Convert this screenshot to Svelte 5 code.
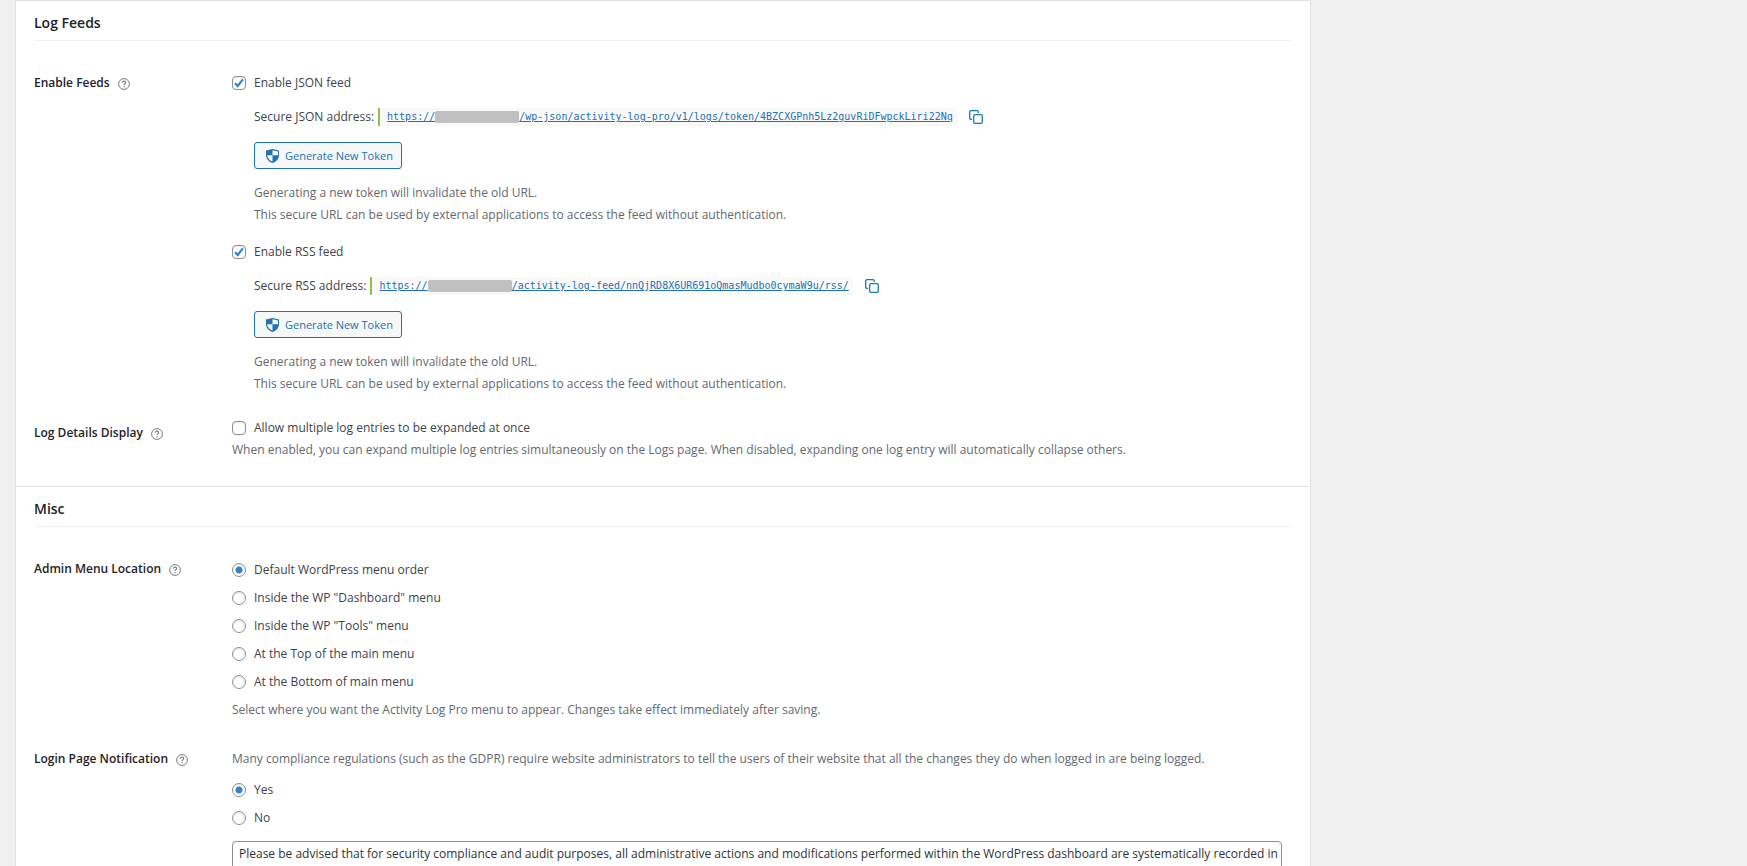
<script>
  const feeds = $state([
    {
      id: 'json',
      name: 'JSON',
      enabled: true,
      path: '/wp-json/activity-log-pro/v1/logs/token/4BZCXGPnh5Lz2guvRiDFwpckLiri22Nq',
    },
    {
      id: 'rss',
      name: 'RSS',
      enabled: true,
      path: '/activity-log-feed/nnQjRD8X6UR691oQmasMudbo0cymaW9u/rss/',
    },
  ]);

  const menuLocations = [
    { value: 'default', label: 'Default WordPress menu order' },
    { value: 'dashboard', label: 'Inside the WP "Dashboard" menu' },
    { value: 'tools', label: 'Inside the WP "Tools" menu' },
    { value: 'top', label: 'At the Top of the main menu' },
    { value: 'bottom', label: 'At the Bottom of main menu' },
  ];

  let expandMultiple = $state(false);
  let menuLocation = $state('default');
  let loginNotice = $state('yes');
  let noticeText = $state(
    'Please be advised that for security compliance and audit purposes, all administrative actions and modifications performed within the WordPress dashboard are systematically recorded in'
  );
</script>

{#snippet help(topic)}
  <button type="button" class="help" aria-label="Help: {topic}">
    <svg viewBox="0 0 12 12" width="12" height="12" fill="none" stroke="currentColor">
      <circle cx="6" cy="6" r="5.4" />
      <path d="M4.3 4.8c0-1 .7-1.7 1.7-1.7s1.7.6 1.7 1.5c0 1.2-1.6 1.2-1.6 2.4" stroke-width="1.1" />
      <path d="M6.1 8v1.2" stroke-width="1.2" />
    </svg>
  </button>
{/snippet}

<main class="wrap">
  <div class="card">
    <section>
      <h2>Log Feeds</h2>

      <div class="row">
        <div class="title">Enable Feeds {@render help('Enable Feeds')}</div>
        <div class="field feeds">
          {#each feeds as feed (feed.id)}
            <div class="feed">
              <label class="option">
                <input type="checkbox" bind:checked={feed.enabled} />
                Enable {feed.name} feed
              </label>
              <div class="feed-body">
                <div class="address">
                  <span>Secure {feed.name} address:</span>
                  <code><a href={feed.path}>https://<span class="mask"></span>{feed.path}</a></code>
                  <button type="button" class="copy" aria-label="Copy {feed.name} address">
                    <svg viewBox="0 0 14 14" width="14" height="14" fill="none" stroke="currentColor" stroke-width="1.3">
                      <rect x="4.7" y="4.7" width="8.6" height="8.6" rx="1.3" />
                      <path d="M3 9.3H2A1.3 1.3 0 0 1 .7 8V2A1.3 1.3 0 0 1 2 .7h6A1.3 1.3 0 0 1 9.3 2v1" />
                    </svg>
                  </button>
                </div>
                <button type="button" class="generate">
                  <svg viewBox="0 0 13 14" width="13" height="14">
                    <path d="M6.5 0 13 1.6v4.3C13 9.6 10.5 12.5 6.5 14 2.5 12.5 0 9.6 0 5.9V1.6z" fill="#2271b1" />
                    <path d="M6.5 1.2 12 2.5v3.8H6.5zM6.5 6.3v6.5C3.4 11.5 1.4 9.2 1.1 6.3z" fill="#f6f7f7" />
                  </svg>
                  Generate New Token
                </button>
                <p class="description">
                  Generating a new token will invalidate the old URL.<br />
                  This secure URL can be used by external applications to access the feed without authentication.
                </p>
              </div>
            </div>
          {/each}
        </div>
      </div>

      <div class="row details">
        <div class="title">Log Details Display {@render help('Log Details Display')}</div>
        <div class="field">
          <label class="option">
            <input type="checkbox" bind:checked={expandMultiple} />
            Allow multiple log entries to be expanded at once
          </label>
          <p class="description">
            When enabled, you can expand multiple log entries simultaneously on the Logs page. When disabled, expanding one log entry will automatically collapse others.
          </p>
        </div>
      </div>
    </section>

    <section>
      <h2>Misc</h2>

      <div class="row">
        <div class="title">Admin Menu Location {@render help('Admin Menu Location')}</div>
        <div class="field radios locations">
          {#each menuLocations as location (location.value)}
            <label class="option">
              <input type="radio" name="menu-location" value={location.value} bind:group={menuLocation} />
              {location.label}
            </label>
          {/each}
          <p class="description">
            Select where you want the Activity Log Pro menu to appear. Changes take effect immediately after saving.
          </p>
        </div>
      </div>

      <div class="row notice">
        <div class="title">Login Page Notification {@render help('Login Page Notification')}</div>
        <div class="field radios">
          <p class="description">
            Many compliance regulations (such as the GDPR) require website administrators to tell the users of their website that all the changes they do when logged in are being logged.
          </p>
          <label class="option">
            <input type="radio" name="login-notice" value="yes" bind:group={loginNotice} />
            Yes
          </label>
          <label class="option">
            <input type="radio" name="login-notice" value="no" bind:group={loginNotice} />
            No
          </label>
          <textarea rows="4" aria-label="Login page notification text" bind:value={noticeText}></textarea>
        </div>
      </div>
    </section>
  </div>
</main>

<style>
  :global(html) {
    height: 100%;
    overflow: hidden;
  }

  :global(body) {
    height: 100%;
    overflow: hidden;
    background: #f0f0f0;
  }

  .wrap {
    box-sizing: border-box;
    padding: 0 calc(25% - 1px) 0 15px;
    color: #3c434a;
    font-family: 'Segoe UI', 'Open Sans', 'Noto Sans', sans-serif;
    font-size: 12px;
    line-height: 22px;
  }

  .card {
    border: 1px solid #e2e2e2;
    border-top: 0;
    background: #fff;
  }

  section {
    border-top: 1px solid #e2e2e2;
    padding: 0 18px 25px;
  }

  h2 {
    margin: 0 0 31px;
    padding: 11px 0 6px;
    border-bottom: 1px solid #f0f0f0;
    color: #1d2327;
    font-size: 14px;
    font-weight: 600;
    line-height: 22px;
  }

  .row {
    display: grid;
    grid-template-columns: 198px 1fr;
  }

  .row.details {
    margin-top: 22px;
  }

  .row.notice {
    margin-top: 27px;
  }

  .title {
    display: flex;
    align-items: center;
    gap: 8px;
    height: 22px;
    color: #1d2327;
    font-weight: 600;
  }

  .details .title {
    margin-top: 5px;
  }

  .field {
    min-width: 0;
    padding-right: 10px;
  }

  .feeds {
    display: grid;
    gap: 15px;
  }

  .feed-body {
    display: grid;
    justify-items: start;
    gap: 13px;
    padding: 11px 0 0 22px;
  }

  .radios {
    display: grid;
    gap: 6px;
  }

  .locations {
    padding-top: 1px;
  }

  .option {
    display: flex;
    align-items: center;
    gap: 8px;
  }

  .help,
  .copy {
    display: flex;
    padding: 0;
    border: 0;
    background: none;
    cursor: pointer;
  }

  .help {
    margin-top: 2px;
    color: #787c82;
  }

  .copy {
    margin-left: 8px;
    color: #1a7aab;
  }

  .address {
    display: flex;
    align-items: center;
    gap: 4px;
    height: 24px;
  }

  code {
    padding: 0 4px 0 7px;
    border-left: 2px solid #8bc34a;
    background: #f9f9f9;
    font-family: Consolas, 'DejaVu Sans Mono', monospace;
    font-size: 10px;
    line-height: 18px;
  }

  .mask {
    display: inline-block;
    width: 84px;
    height: 12px;
    border-radius: 2px;
    background: #c0c0c0;
    vertical-align: middle;
  }

  a {
    color: #2271b1;
  }

  .generate {
    display: flex;
    align-items: center;
    gap: 6px;
    height: 27px;
    padding: 0 8px 0 11px;
    border: 1px solid #2271b1;
    border-radius: 3px;
    background: #f6f7f7;
    color: #2271b1;
    font: inherit;
    font-size: 11px;
    cursor: pointer;
  }

  .description {
    margin: 0;
    color: #646970;
  }

  .notice .description {
    margin-bottom: 3px;
  }

  input {
    appearance: none;
    box-sizing: border-box;
    width: 14px;
    height: 14px;
    margin: 0;
    border: 1px solid #8c8f94;
    background: #fff center no-repeat;
    box-shadow: inset 0 1px 2px rgba(0, 0, 0, 0.1);
  }

  input[type='checkbox'] {
    border-radius: 4px;
  }

  input[type='checkbox']:checked {
    background-image: url("data:image/svg+xml,%3Csvg xmlns='http://www.w3.org/2000/svg' width='12' height='12' viewBox='0 0 12 12'%3E%3Cpath d='M2 6.2 4.7 9 9.9 2.4' fill='none' stroke='%233582c4' stroke-width='2.2'/%3E%3C/svg%3E");
  }

  input[type='radio'] {
    border-radius: 50%;
  }

  input[type='radio']:checked {
    background-image: radial-gradient(circle, #3582c4 3px, transparent 4px);
  }

  textarea {
    box-sizing: border-box;
    width: 100%;
    margin-top: 6px;
    padding: 1px 1px 1px 6px;
    border: 1px solid #8c8f94;
    border-radius: 4px;
    color: #2c3338;
    font: inherit;
    resize: vertical;
  }
</style>
